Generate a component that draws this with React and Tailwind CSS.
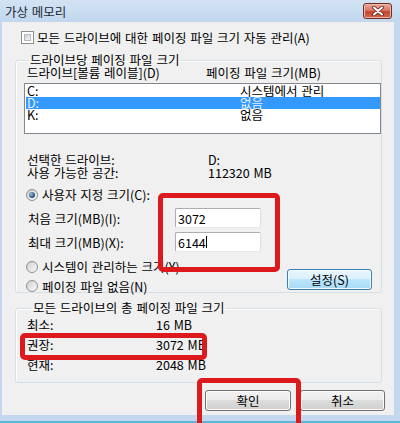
import React from 'react';

const Check = () => (
  <span className="w-[13px] h-[13px] border border-[#8e8f8f] bg-white p-[2px] shrink-0">
    <span className="block w-full h-full border border-[#b3b8bd] bg-[linear-gradient(135deg,#cdd1d6,#f4f5f6)]" />
  </span>
);

const Radio = ({ on }) => (
  <span className="w-[12px] h-[12px] rounded-full border border-[#8e8f8f] bg-[linear-gradient(135deg,#cfcfcf,#fbfbfb)] flex items-center justify-center shrink-0">
    {on && <span className="w-[6px] h-[6px] rounded-full bg-[radial-gradient(circle_at_35%_35%,#9cc0e0,#1d4b79_70%)]" />}
  </span>
);

const Btn = ({ children, hot, className }) => (
  <div
    className={
      hot
        ? `h-[21px] rounded-[3px] border border-[#3c7fb1] shadow-[inset_0_0_0_1px_#f4fbfe] bg-[linear-gradient(#eaf6fd_0%,#d9f0fc_49%,#bee6fd_50%,#a7d9f5_100%)] flex items-center justify-center leading-[13px] ${className}`
        : `h-[21px] rounded-[3px] border border-[#707070] shadow-[inset_0_0_0_1px_#fcfcfc] bg-[linear-gradient(#f2f2f2_0%,#ebebeb_49%,#dddddd_50%,#cfcfcf_100%)] flex items-center justify-center leading-[13px] ${className}`
    }
  >
    {children}
  </div>
);

const Field = ({ value, caret }) => (
  <div className="w-[86px] h-[20px] bg-white border border-[#abadb3] border-r-[#dbdfe6] border-b-[#e3e9ef] rounded-[2px] flex items-center pl-[2px] leading-[13px]">
    <span>{value}</span>
    {caret && <span className="w-px h-[12px] bg-black" />}
  </div>
);

const Highlight = ({ className }) => (
  <div className={`absolute border-[5px] border-[#dc1a1e] rounded-[5px] pointer-events-none ${className}`} />
);

const drives = [
  { id: 'C:', size: '시스템에서 관리' },
  { id: 'D:', size: '없음', sel: true },
  { id: 'K:', size: '없음' },
];

const totals = [
  ['최소:', '16 MB'],
  ['권장:', '3072 MB'],
  ['현재:', '2048 MB'],
];

export default function App() {
  return (
    <div className="w-[400px] h-[423px] relative overflow-hidden bg-[#c3d8ef] font-['Noto_Sans_CJK_KR',sans-serif] text-[12.5px] [word-spacing:1px] text-black">
      {/* title bar */}
      <div className="h-[22px] flex items-start justify-between pl-[5px] pr-[8px] bg-[linear-gradient(#d3e3f4,#c1d7ee)]">
        <span className="mt-[5px] leading-[14px] text-[#1c2733]">가상 메모리</span>
        <div className="mt-[3px] w-[29px] h-[16px] rounded-[3px] border border-[#6d2e26] shadow-[inset_0_0_0_1px_#eeb5a8] bg-[linear-gradient(#eba897,#d7796a_45%,#c4432d_55%,#cd6a52)] flex items-center justify-center">
          <svg width="12" height="10" viewBox="0 0 12 10">
            <path d="M2 1.5 L10 8.5 M10 1.5 L2 8.5" stroke="#5a2219" strokeWidth="3.6" strokeLinecap="round" />
            <path d="M2 1.5 L10 8.5 M10 1.5 L2 8.5" stroke="#fff" strokeWidth="2" strokeLinecap="round" />
          </svg>
        </div>
      </div>

      {/* client area */}
      <div className="ml-[2px] w-[392px] h-[393px] bg-[#f0f0f0] flex flex-col">
        <div className="mt-[9px] ml-[19px] h-[13px] flex items-center gap-[3px]">
          <Check />
          <span className="leading-[13px]">모든 드라이브에 대한 페이징 파일 크기 자동 관리(A)</span>
        </div>

        {/* per drive group */}
        <fieldset className="mt-[10px] ml-[13px] w-[367px] min-w-0 border border-[#d5dfe5] rounded-[3px] shadow-[inset_1px_1px_0_#fff] pl-[8px] pr-0 pb-0">
          <legend className="ml-[5px] px-[1px] leading-[12px]">드라이브당 페이징 파일 크기</legend>
          <div className="h-[13px] flex leading-[13px] pl-[3px]">
            <span className="w-[179px]">드라이브[볼륨 레이블](D)</span>
            <span>페이징 파일 크기(MB)</span>
          </div>
          <div className="mt-[4px] w-[357px] h-[51px] border border-[#828790] bg-white pt-px pl-px">
            {drives.map((d) => (
              <div
                key={d.id}
                className={d.sel ? 'h-[12px] flex leading-[12px] bg-[#3399ff] text-[#e6f0ff]' : 'h-[12px] flex leading-[12px]'}
              >
                <span className="w-[214px] pl-px">{d.id}</span>
                <span>{d.size}</span>
              </div>
            ))}
          </div>

          <div className="mt-[19px] pl-[3px] flex flex-col leading-[13px]">
            <div className="h-[13px] flex">
              <span className="w-[181px]">선택한 드라이브:</span>
              <span>D:</span>
            </div>
            <div className="h-[13px] flex">
              <span className="w-[181px]">사용 가능한 공간:</span>
              <span>112320 MB</span>
            </div>
          </div>

          <div className="mt-[9px] pl-[2px] h-[13px] flex items-center gap-[4px] leading-[13px]">
            <Radio on />
            <span>사용자 지정 크기(C):</span>
          </div>
          <div className="mt-[7px] pl-[4px] h-[20px] flex items-center leading-[13px]">
            <span className="w-[147px]">처음 크기(MB)(I):</span>
            <Field value="3072" />
          </div>
          <div className="mt-[4px] pl-[4px] h-[20px] flex items-center leading-[13px]">
            <span className="w-[147px]">최대 크기(MB)(X):</span>
            <Field value="6144" caret />
          </div>

          <div className="mt-[8px] flex">
            <div className="flex flex-col gap-[7px] pl-[2px] leading-[13px]">
              <div className="h-[13px] flex items-center gap-[4px]">
                <Radio />
                <span>시스템이 관리하는 크기(Y)</span>
              </div>
              <div className="h-[12px] flex items-center gap-[4px]">
                <Radio />
                <span>페이징 파일 없음(N)</span>
              </div>
            </div>
            <Btn hot className="ml-auto mr-[9px] mt-[9px] w-[85px] h-[20px]">설정(S)</Btn>
          </div>
        </fieldset>

        {/* totals group */}
        <fieldset className="mt-[9px] ml-[13px] w-[367px] min-w-0 border border-[#d5dfe5] rounded-[3px] shadow-[inset_1px_1px_0_#fff] pl-[11px] pb-[8px]">
          <legend className="ml-[5px] px-[1px] leading-[12px]">모든 드라이브의 총 페이징 파일 크기</legend>
          {totals.map(([k, v]) => (
            <div key={k} className="h-[20px] flex items-center leading-[13px]">
              <span className="w-[129px]">{k}</span>
              <span>{v}</span>
            </div>
          ))}
        </fieldset>

        <div className="mt-[7px] flex justify-end gap-[9px] pr-[9px]">
          <Btn className="w-[86px]">확인</Btn>
          <Btn className="w-[85px]">취소</Btn>
        </div>
      </div>

      {/* bottom frame */}
      <div className="h-[8px] border-b-[2px] border-[#5db3da]" />

      {/* red annotation boxes */}
      <Highlight className="left-[158px] top-[193px] w-[122px] h-[79px]" />
      <Highlight className="left-[20px] top-[333px] w-[187px] h-[27px]" />
      <Highlight className="left-[197px] top-[378px] w-[104px] h-[50px]" />
    </div>
  );
}
